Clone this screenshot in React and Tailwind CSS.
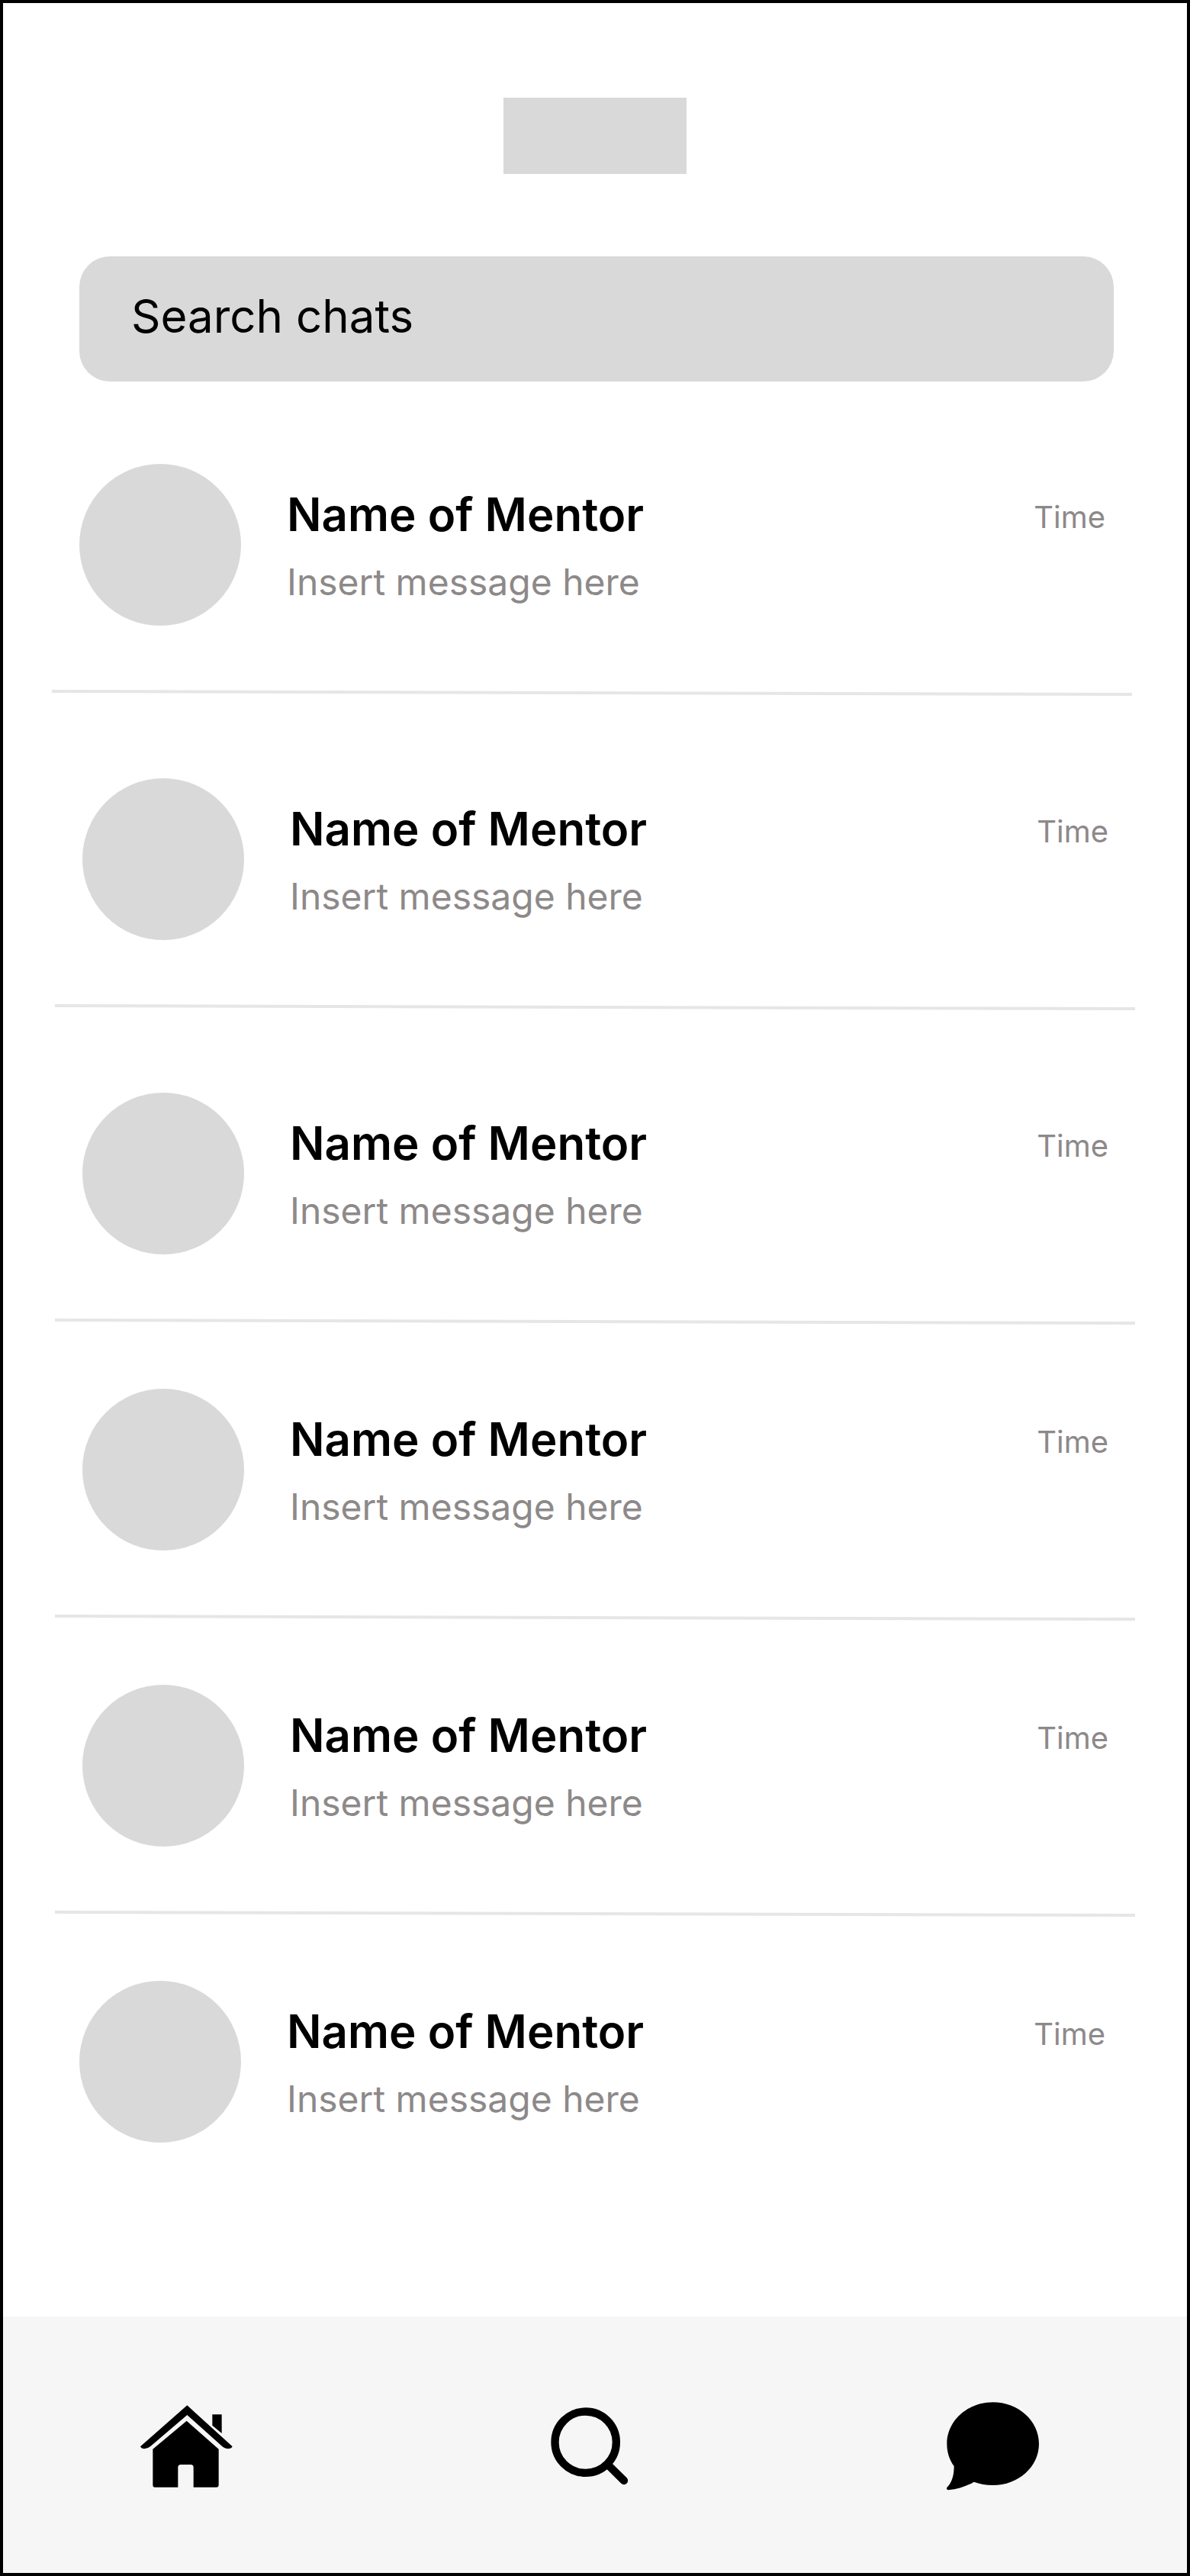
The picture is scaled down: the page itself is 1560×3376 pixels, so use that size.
const chats = [
  { id: 1, row: "pl-[100px] pr-[107px]", line: "ml-[64px] mr-[72px]", gap: "mb-[110px]" },
  { id: 2, row: "pl-[104px] pr-[103px]", line: "ml-[68px] mr-[68px]", gap: "mb-[110px]" },
  { id: 3, row: "pl-[104px] pr-[103px]", line: "ml-[68px] mr-[68px]", gap: "mb-[86px]" },
  { id: 4, row: "pl-[104px] pr-[103px]", line: "ml-[68px] mr-[68px]", gap: "mb-[86px]" },
  { id: 5, row: "pl-[104px] pr-[103px]", line: "ml-[68px] mr-[68px]", gap: "mb-[86px]" },
  { id: 6, row: "pl-[100px] pr-[107px]" },
];

function ChatRow({ chat }) {
  return (
    <li>
      <a href="#chat" className={`flex items-start ${chat.row}`}>
        <span className="size-[212px] shrink-0 rounded-full bg-[#d9d9d9]" />
        <span className="ml-[60px] flex min-w-0 flex-1 flex-col gap-[23px] pt-[30px]">
          <span className="text-[60px] leading-[73px] font-semibold text-black">Name of Mentor</span>
          <span className="text-[48px] leading-[58px] text-[#8d8989]">Insert message here</span>
        </span>
        <span className="pt-[46px] text-[40px] leading-[48px] text-[#8d8989]">Time</span>
      </a>
      {chat.line && (
        <hr className={`mt-[86px] h-1 rotate-[0.162deg] border-0 bg-[#e6e6e6] ${chat.line} ${chat.gap}`} />
      )}
    </li>
  );
}

function HomeIcon() {
  return (
    <svg viewBox="66 72 372 372" className="size-[124px]" aria-hidden="true">
      <path d="M256 97 L434 259 Q430 268 416 268 Q405 267 396 260 L256 135 L112 258 Q100 268 88 268 Q76 268 72 259 Z" />
      <path d="M355 133 H392 V207 L355 176 Z" />
      <path d="M254 158 L380 269 V410 Q380 419 371 419 H281 V341 Q281 330 270 330 H231 Q220 330 220 341 V419 H129 Q121 419 121 410 V269 Z" />
    </svg>
  );
}

function SearchIcon() {
  return (
    <svg viewBox="33 42 372 372" className="size-[124px]" fill="none" stroke="black" aria-hidden="true">
      <circle cx="203" cy="212" r="120.500" strokeWidth="31" />
      <path d="M292 302 L354 363" strokeWidth="31" strokeLinecap="round" />
    </svg>
  );
}

function ChatIcon() {
  return (
    <svg viewBox="57 72 372 372" className="size-[124px]" aria-hidden="true">
      <path d="M245 85 C345 85 426 158 426 248 C426 338 345 411 245 411 C218 411 193 406 170 398 C143 415 108 426 70 430 Q60 429 64 420 C84 402 92 371 92 336 C74 311 64 281 64 248 C64 158 145 85 245 85 Z" />
    </svg>
  );
}

export default function App() {
  return (
    <div className="flex min-h-screen flex-col border-4 border-black bg-white font-['Inter',sans-serif] text-black">
      <header className="pt-[124px] pr-[96px] pl-[100px]">
        <div className="mr-1 flex justify-center">
          <div className="h-[100px] w-[240px] bg-[#d9d9d9]" />
        </div>
        <input
          type="search"
          aria-label="Search chats"
          placeholder="Search chats"
          className="mt-[108px] block h-[164px] w-full appearance-none rounded-[40px] bg-[#d9d9d9] px-[68px] pb-[8px] text-[60px] text-black placeholder:text-black placeholder:opacity-100"
        />
      </header>

      <main className="flex-1 pt-[108px] pb-[228px]">
        <ul>
          {chats.map((chat) => (
            <ChatRow key={chat.id} chat={chat} />
          ))}
        </ul>
      </main>

      <nav className="flex items-center justify-between bg-[#f6f6f6] pt-[108px] pr-[193px] pb-[104px] pl-[178px]">
        <button type="button" aria-label="Home"><HomeIcon /></button>
        <button type="button" aria-label="Search"><SearchIcon /></button>
        <button type="button" aria-label="Chats"><ChatIcon /></button>
      </nav>
    </div>
  );
}
